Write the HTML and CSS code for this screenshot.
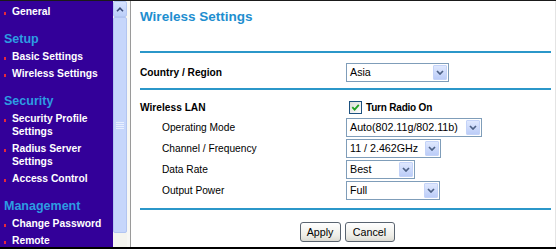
FILE: index.html
```html
<!DOCTYPE html>
<html>
<head>
<meta charset="utf-8">
<link rel="stylesheet" href="styles.css">
</head>
<body>
<div class="frame">
  <nav class="sidebar">
    <ul class="menu">
      <li class="item">General</li>
      <li class="heading">Setup</li>
      <li class="item">Basic Settings</li>
      <li class="item">Wireless Settings</li>
      <li class="heading">Security</li>
      <li class="item">Security Profile<br>Settings</li>
      <li class="item">Radius Server<br>Settings</li>
      <li class="item">Access Control</li>
      <li class="heading">Management</li>
      <li class="item">Change Password</li>
      <li class="item">Remote</li>
    </ul>
  </nav>
  <div class="scrollbar">
    <div class="sb-up">
      <svg width="8" height="5" viewBox="0 0 8 5"><path d="M1 4.2 L4 1.2 L7 4.2" fill="none" stroke="#3a4a78" stroke-width="1.6"/></svg>
    </div>
    <div class="sb-thumb">
      <svg width="8" height="8" viewBox="0 0 8 8"><path d="M0 1.5H8M0 3.5H8M0 5.5H8M0 7.5H8" stroke="#e8efff" stroke-width="1"/></svg>
    </div>
  </div>
  <div class="gutter"></div>
  <main class="main">
    <h1 class="title">Wireless Settings</h1>
    <div class="rule rule-top"></div>
    <div class="row country">
      <div class="label strong">Country / Region</div>
      <div class="select w-asia"><span class="value">Asia</span><span class="arrow"><svg width="8" height="5" viewBox="0 0 8 5"><path d="M1 1 L4 4 L7 1" fill="none" stroke="#4d6185" stroke-width="1.7"/></svg></span></div>
    </div>
    <div class="rule"></div>
    <div class="row wlan">
      <div class="label strong">Wireless LAN</div>
      <div class="check">
        <span class="box"><svg width="9" height="9" viewBox="0 0 9 9"><path d="M1.3 4.2 L3.6 6.6 L7.8 1.8" fill="none" stroke="#21a121" stroke-width="1.8"/></svg></span>
        <span class="check-text">Turn Radio On</span>
      </div>
    </div>
    <div class="settings">
      <div class="row">
        <div class="label indent">Operating Mode</div>
        <div class="select w-auto"><span class="value">Auto(802.11g/802.11b)</span><span class="arrow"><svg width="8" height="5" viewBox="0 0 8 5"><path d="M1 1 L4 4 L7 1" fill="none" stroke="#4d6185" stroke-width="1.7"/></svg></span></div>
      </div>
      <div class="row">
        <div class="label indent">Channel / Frequency</div>
        <div class="select w-chan"><span class="value">11 / 2.462GHz</span><span class="arrow"><svg width="8" height="5" viewBox="0 0 8 5"><path d="M1 1 L4 4 L7 1" fill="none" stroke="#4d6185" stroke-width="1.7"/></svg></span></div>
      </div>
      <div class="row">
        <div class="label indent">Data Rate</div>
        <div class="select w-best"><span class="value">Best</span><span class="arrow"><svg width="8" height="5" viewBox="0 0 8 5"><path d="M1 1 L4 4 L7 1" fill="none" stroke="#4d6185" stroke-width="1.7"/></svg></span></div>
      </div>
      <div class="row">
        <div class="label indent">Output Power</div>
        <div class="select w-full"><span class="value">Full</span><span class="arrow"><svg width="8" height="5" viewBox="0 0 8 5"><path d="M1 1 L4 4 L7 1" fill="none" stroke="#4d6185" stroke-width="1.7"/></svg></span></div>
      </div>
    </div>
    <div class="rule rule-bottom"></div>
    <div class="buttons">
      <button class="btn btn-apply">Apply</button>
      <button class="btn btn-cancel">Cancel</button>
    </div>
  </main>
</div>
</body>
</html>
```

FILE: styles.css
```css
* { box-sizing: border-box; }

body {
  margin: 0;
  background: #ffffff;
  font-family: "Liberation Sans", Arial, sans-serif;
}

.frame {
  display: flex;
  width: 556px;
  height: 249px;
  border-top: 1px solid #1a1a1a;
  border-bottom: 2px solid #000000;
  overflow: hidden;
}

/* ---------- sidebar ---------- */
.sidebar {
  flex: none;
  width: 113px;
  background: #330099;
  padding-top: 2px;
}

.menu {
  list-style: none;
  margin: 0;
  padding: 0;
}

.item {
  display: flex;
  padding: 2px 0;
  color: #ffffff;
  font-weight: bold;
  font-size: 10.3px;
  line-height: 13px;
}

.item::before {
  content: "";
  flex: none;
  width: 2px;
  height: 3px;
  margin: 7px 6px 0 4px;
  background: #e8283a;
}

.heading {
  margin-top: 11px;
  padding-left: 4px;
  color: #2d9ce2;
  font-weight: bold;
  font-size: 12.5px;
  line-height: 17px;
}

/* ---------- scrollbar ---------- */
.scrollbar {
  flex: none;
  width: 14px;
  display: flex;
  flex-direction: column;
  background: #f4f4ef;
}

.sb-up {
  height: 16px;
  display: flex;
  align-items: center;
  justify-content: center;
  background: linear-gradient(#d6e2fd, #bccff9);
  border: 1px solid #b4c7f2;
  border-radius: 2px;
}

.sb-thumb {
  flex: 1;
  margin-bottom: 14px;
  display: flex;
  align-items: center;
  justify-content: center;
  background: #c6d6fb;
  border: 1px solid #b2c5f1;
  border-radius: 2px;
}

.gutter {
  flex: none;
  width: 3px;
  background: #f7f7f4;
}

/* ---------- main ---------- */
.main {
  flex: 1;
  border-left: 1px solid #9a9a9a;
  border-right: 1px solid #e4e4e4;
  padding: 0 1px 0 9px;
  font-size: 10.2px;
  color: #000000;
}

.title {
  margin: 0;
  padding-top: 8px;
  color: #1e8ecf;
  font-size: 13.5px;
  font-weight: bold;
  line-height: 16px;
}

.rule {
  height: 2px;
  background: #2b97c9;
  margin-right: 3px;
}

.rule-top { margin-top: 26px; }
.rule-bottom { margin-top: 8px; }

.row {
  display: grid;
  grid-template-columns: 206px 1fr;
  align-items: center;
}

.country {
  padding: 10px 0 6px;
}

.wlan {
  margin-top: 10px;
  height: 14px;
}

.settings {
  margin-top: 4px;
  display: flex;
  flex-direction: column;
  gap: 2px;
}

.label {
  line-height: 13px;
  white-space: nowrap;
}

.strong { font-weight: bold; }
.indent { padding-left: 22px; }

/* select */
.select {
  display: flex;
  align-items: stretch;
  height: 19px;
  border: 1px solid #7f9db9;
  background: #ffffff;
  font-size: 10.7px;
}

.value {
  flex: 1;
  padding-left: 3px;
  line-height: 17px;
  white-space: nowrap;
  overflow: hidden;
}

.arrow {
  flex: none;
  width: 14px;
  margin: 1px;
  display: flex;
  align-items: center;
  justify-content: center;
  background: linear-gradient(#dfe8fe, #bccdf8);
  border: 1px solid #c4d3f8;
  border-radius: 1px;
}

.w-asia { width: 103px; }
.w-auto { width: 136px; }
.w-chan { width: 95px; }
.w-best { width: 69px; }
.w-full { width: 94px; }

/* checkbox */
.check {
  display: flex;
  align-items: center;
  gap: 4px;
  padding-left: 3px;
}

.box {
  width: 13px;
  height: 13px;
  display: flex;
  align-items: center;
  justify-content: center;
  border: 1px solid #1c5180;
  background: linear-gradient(135deg, #dcdcd7, #ffffff);
}

.check-text {
  font-weight: bold;
  font-size: 10px;
  letter-spacing: -0.2px;
}

/* buttons */
.buttons {
  margin-top: 12px;
  display: flex;
  justify-content: center;
  gap: 4px;
}

.btn {
  height: 20px;
  padding: 0;
  border: 1px solid #5a6470;
  border-radius: 3px;
  background: linear-gradient(#ffffff, #eeede7 70%, #dcdbd3);
  font-family: "Liberation Sans", Arial, sans-serif;
  font-size: 10.7px;
  color: #000000;
}

.btn-apply { width: 41px; }
.btn-cancel { width: 50px; }
```
